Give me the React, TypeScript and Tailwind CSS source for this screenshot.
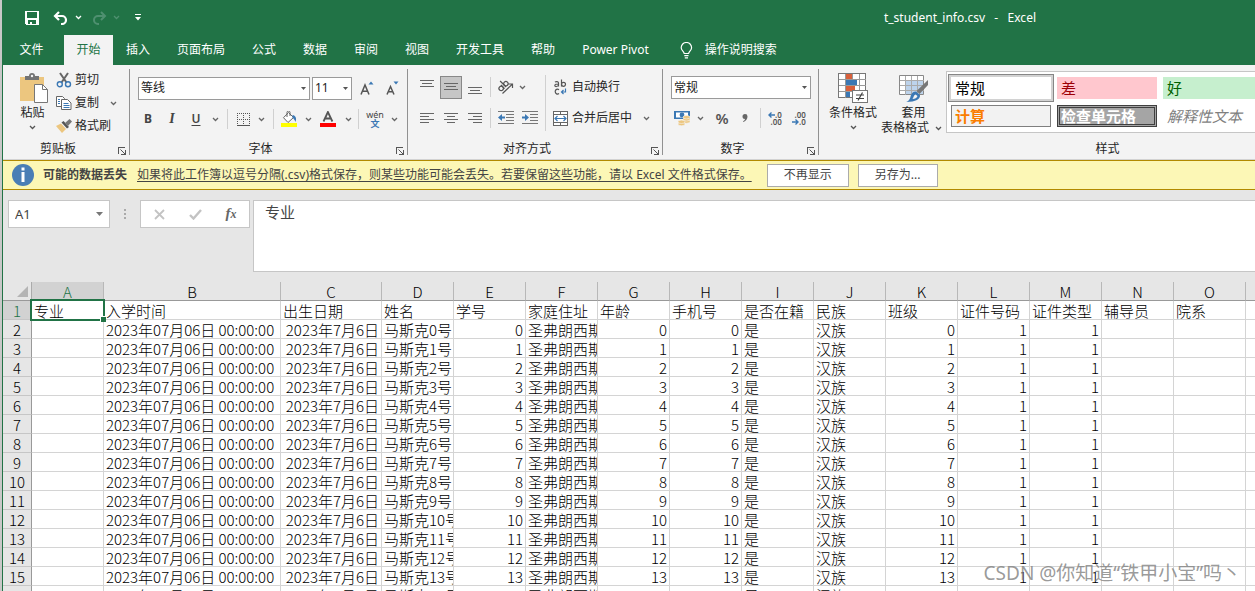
import type { ReactNode } from "react";
import clsx from "clsx";

type Align = "left" | "right";

type Column = {
  id: string;
  title: string;
  width: string;
  align: Align;
  value: (index: number) => string;
};

const COLUMNS: Column[] = [
  { id: "A", title: "专业", width: "w-[72px]", align: "left", value: () => "" },
  { id: "B", title: "入学时间", width: "w-[177px]", align: "left", value: () => "2023年07月06日 00:00:00" },
  { id: "C", title: "出生日期", width: "w-[101px]", align: "right", value: () => "2023年7月6日" },
  { id: "D", title: "姓名", width: "w-[72px]", align: "left", value: (i) => `马斯克${i}号` },
  { id: "E", title: "学号", width: "w-[72px]", align: "right", value: (i) => `${i}` },
  { id: "F", title: "家庭住址", width: "w-[72px]", align: "left", value: () => "圣弗朗西斯科" },
  { id: "G", title: "年龄", width: "w-[72px]", align: "right", value: (i) => `${i}` },
  { id: "H", title: "手机号", width: "w-[72px]", align: "right", value: (i) => `${i}` },
  { id: "I", title: "是否在籍", width: "w-[72px]", align: "left", value: () => "是" },
  { id: "J", title: "民族", width: "w-[72px]", align: "left", value: () => "汉族" },
  { id: "K", title: "班级", width: "w-[72px]", align: "right", value: (i) => `${i}` },
  { id: "L", title: "证件号码", width: "w-[72px]", align: "right", value: () => "1" },
  { id: "M", title: "证件类型", width: "w-[72px]", align: "right", value: () => "1" },
  { id: "N", title: "辅导员", width: "w-[72px]", align: "left", value: () => "" },
  { id: "O", title: "院系", width: "w-[72px]", align: "left", value: () => "" },
  { id: "P", title: "", width: "w-[72px]", align: "left", value: () => "" }
];

const ROWS = Array.from({ length: 15 }, (_, index) => index);

const TABS = ["插入", "页面布局", "公式", "数据", "审阅", "视图", "开发工具", "帮助", "Power Pivot"];

function Chevron({ className }: { className?: string }) {
  return (
    <svg viewBox="0 0 7 5" className={clsx("h-[5px] w-[7px] shrink-0", className)} fill="none" stroke="currentColor" strokeWidth="1.3">
      <path d="M1 1l2.5 2.5L6 1" />
    </svg>
  );
}

function ChevronButton({ label }: { label: string }) {
  return (
    <button type="button" aria-label={label} className="flex h-6 w-3.5 items-center justify-center text-[#666]">
      <Chevron />
    </button>
  );
}

function IconButton({ label, className, children }: { label: string; className?: string; children: ReactNode }) {
  return (
    <button type="button" aria-label={label} className={clsx("flex h-6 items-center justify-center", className ?? "w-6")}>
      {children}
    </button>
  );
}

function Divider({ className }: { className?: string }) {
  return <span className={clsx("w-px shrink-0 bg-[#d0d0d0]", className ?? "h-5")} />;
}

function Combo({ label, options, className }: { label: string; options: string[]; className: string }) {
  return (
    <div className={clsx("relative h-[23px]", className)}>
      <select
        aria-label={label}
        className="h-full w-full appearance-none border border-[#9a9a9a] bg-white pl-0.5 text-xs leading-5 text-[#222]"
      >
        {options.map((option) => (
          <option key={option}>{option}</option>
        ))}
      </select>
      <svg viewBox="0 0 5 3" className="pointer-events-none absolute right-1 top-2.5 h-[3px] w-[5px] fill-[#555]">
        <path d="M0 0h5L2.5 3z" />
      </svg>
    </div>
  );
}

function Group({ title, className, launcher = true, children }: { title: string; className: string; launcher?: boolean; children: ReactNode }) {
  return (
    <section className={clsx("flex shrink-0 flex-col border-r border-[#919191]", className)}>
      <div className="h-[70px]">{children}</div>
      <div className={clsx("relative h-4 text-center leading-5", launcher && "pr-4")}>
        {title}
        {launcher ? (
          <button type="button" aria-label={`${title}设置`} className="absolute right-[3px] top-2">
            <svg viewBox="0 0 8 8" className="h-2 w-2" fill="none" stroke="#555" shapeRendering="crispEdges">
              <path d="M.5 7V.5H7M7.5 3v4.5H3" />
              <path d="M2.5 2.5L7 7" shapeRendering="auto" />
            </svg>
          </button>
        ) : null}
      </div>
    </section>
  );
}

// Each entry is [x1, x2] of one horizontal stroke, three pixels apart.
function Lines({ rows, top = 0 }: { rows: [number, number][]; top?: number }) {
  return (
    <svg viewBox="0 0 14 14" className="h-3.5 w-3.5" stroke="#666" shapeRendering="crispEdges">
      {rows.map(([from, to], index) => (
        <path key={index} d={`M${from} ${top + index * 3 + 0.5}H${to}`} />
      ))}
    </svg>
  );
}

function IndentIcon({ outward }: { outward?: boolean }) {
  return (
    <svg viewBox="0 0 16 14" className="h-3.5 w-4" fill="none">
      <path d="M0 .5H16M8 3.5H16M8 6.5H16M8 9.5H16M0 12.5H16" stroke="#777" shapeRendering="crispEdges" />
      <path d={outward ? "M0 6.5L4 3v2.500h3v2H4V10z" : "M7 6.500L3 3v2.500H0v2h3V10z"} fill="#3b78b4" />
    </svg>
  );
}

function TitleBar() {
  return (
    <header className="flex h-[35px] shrink-0 items-center bg-[#217346] text-white">
      <div className="flex items-center pl-5">
        <IconButton label="保存" className="w-[18px]">
          <svg viewBox="0 0 14 14" className="h-3.5 w-3.5" fill="white" fillRule="evenodd" shapeRendering="crispEdges">
            <path d="M0 0h14v14H1L0 13zM2 1v6h10V1zM3 9v4h2v-2h2v2h4V9z" />
          </svg>
        </IconButton>
        <IconButton label="撤消" className="ml-2.5 w-5">
          <svg viewBox="0 0 16 14" className="h-3.5 w-4" fill="none" stroke="white" strokeWidth="2.2">
            <path d="M2 5h7a4 4 0 010 8H8" />
            <path d="M6 1L2 5l4 4" />
          </svg>
        </IconButton>
        <IconButton label="撤消列表" className="w-3.5">
          <Chevron />
        </IconButton>
        <IconButton label="恢复" className="ml-1 w-5 text-[#4f9070]">
          <svg viewBox="0 0 16 14" className="h-3.5 w-4" fill="none" stroke="currentColor" strokeWidth="2">
            <path d="M14 5H7a4 4 0 000 8h1" />
            <path d="M10 1l4 4-4 4" />
          </svg>
        </IconButton>
        <IconButton label="恢复列表" className="w-3.5 text-[#4f9070]">
          <Chevron />
        </IconButton>
        <IconButton label="自定义快速访问工具栏" className="ml-2 w-3.5">
          <svg viewBox="0 0 6 7" className="h-[7px] w-1.5" fill="white">
            <path d="M0 0h6v1H0zM0 3h6L3 6.5z" />
          </svg>
        </IconButton>
      </div>
      <h1 className="ml-auto whitespace-pre pr-[219px] text-xs">t_student_info.csv   -   Excel</h1>
    </header>
  );
}

function TabBar() {
  return (
    <nav className="flex h-[30px] shrink-0 items-stretch bg-[#217346] text-white">
      <button type="button" className="w-[61px] pr-1">文件</button>
      <button type="button" className="w-[49px] bg-[#f3f3f3] text-[#217346]">开始</button>
      <div className="flex gap-px">
        {TABS.map((tab) => (
          <button key={tab} type="button" className="whitespace-nowrap px-[13px]">
            {tab}
          </button>
        ))}
      </div>
      <button type="button" className="ml-[18px] flex items-center gap-3 whitespace-nowrap">
        <svg viewBox="0 0 13 17" className="h-[17px] w-[13px]" fill="none" stroke="white" strokeWidth="1.2">
          <path d="M4.200 11.500C4 9.500 1.200 8.500 1.200 5.700a5.200 5.200 0 0110.400 0c0 2.800-2.800 3.800-3 5.800z" />
          <path d="M4.300 13.700h4.200M4.800 15.800h3.200" />
        </svg>
        操作说明搜索
      </button>
    </nav>
  );
}

function ClipboardGroup() {
  return (
    <Group title="剪贴板" className="w-[127px]">
      <div className="flex pl-[13px]">
        <button type="button" className="flex h-[68px] w-[33px] flex-col items-center pt-1">
          <svg viewBox="0 0 28 30" className="ml-0.5 h-[30px] w-7 shrink-0">
            <path d="M0 4h24v24H0z" fill="#ecc67f" />
            <path d="M5 7V3h4a3 3 0 016 0h4v4z" fill="#737373" />
            <circle cx="12" cy="3" r="1.2" fill="#f3f3f3" />
            <path d="M14.500 11.500h8l5 5v13h-13z" fill="white" stroke="#777" />
            <path d="M22.500 11.500v5h5" fill="none" stroke="#777" />
          </svg>
          <span className="mt-0.5 whitespace-nowrap leading-4">粘贴</span>
          <Chevron className="mt-1 text-[#555]" />
        </button>
        <div className="ml-[7px] flex flex-col">
          <button type="button" className="flex h-[22px] items-center gap-[3px]">
            <svg viewBox="0 0 16 16" className="h-4 w-4" fill="none">
              <path d="M4 1l6.500 9.500M12 1L5.500 10.500" stroke="#666" strokeWidth="2" />
              <circle cx="3.800" cy="12.300" r="2.500" stroke="#3b78b4" strokeWidth="1.4" />
              <circle cx="12" cy="12.300" r="2.500" stroke="#3b78b4" strokeWidth="1.4" />
            </svg>
            剪切
          </button>
          <div className="flex h-6 items-center">
            <button type="button" className="flex items-center gap-[3px]">
              <svg viewBox="0 0 16 16" className="h-4 w-4" fill="white" stroke="#666">
                <path d="M.5 1.500h6l2 2v8h-8z" />
                <path d="M5.500 4.500h6l3.500 3.500v6.500H5.500z" />
                <path d="M2 4.500h2M2 6.500h2M2 8.500h2M7.500 8.500h5M7.500 10.500h6M7.500 12.500h6" stroke="#3b78b4" />
              </svg>
              复制
            </button>
            <span className="w-[7px]" />
            <ChevronButton label="复制选项" />
          </div>
          <button type="button" className="flex h-[22px] items-center gap-[3px]">
            <svg viewBox="0 0 16 14" className="h-3.5 w-4">
              <path d="M0 7l5-2.500 5 5.500-4 4z" fill="#ecc67f" />
              <path d="M5.500 3.500l2-1.500L13 8l-2 1.500z" fill="#555" />
              <path d="M9 4l4.500-4L16 2.500 12 7z" fill="#777" />
            </svg>
            格式刷
          </button>
        </div>
      </div>
    </Group>
  );
}

function FontGroup() {
  return (
    <Group title="字体" className="w-[278px]">
      <div className="flex items-center gap-0.5 pl-2 pt-[7px]">
        <Combo label="字体" options={["等线", "宋体"]} className="w-[172px]" />
        <Combo label="字号" options={["11", "12", "14"]} className="w-10" />
        <IconButton label="增大字号" className="ml-0.5 w-[22px]">
          <svg viewBox="0 0 14 14" className="h-3.5 w-3.5" fill="none" stroke="#555" strokeWidth="1.5">
            <path d="M1 13.500L5 4l4 9.500M2.500 10.200h5" />
            <path d="M8.500 3.500L11 .5l2.500 3z" fill="#3b78b4" stroke="none" />
          </svg>
        </IconButton>
        <IconButton label="减小字号" className="w-6">
          <svg viewBox="0 0 14 14" className="h-3.5 w-3.5" fill="none" stroke="#555" strokeWidth="1.5">
            <path d="M2 13.500L5.500 5.500 9 13.500M3.300 10.700h4.500" />
            <path d="M8.500 .5h5L11 3.500z" fill="#3b78b4" stroke="none" />
          </svg>
        </IconButton>
      </div>
      <div className="flex items-center pl-1.5 pt-[7px] text-[#444]">
        <IconButton label="加粗">
          <b className="text-xs">B</b>
        </IconButton>
        <IconButton label="倾斜">
          <i className="font-['Liberation_Serif',serif] text-sm font-bold">I</i>
        </IconButton>
        <IconButton label="下划线">
          <u className="text-xs font-semibold underline-offset-2">U</u>
        </IconButton>
        <ChevronButton label="下划线选项" />
        <Divider className="ml-[5px] h-5" />
        <IconButton label="边框" className="ml-1 w-[22px]">
          <svg viewBox="0 0 13 13" className="h-[13px] w-[13px]" stroke="#555" fill="none" shapeRendering="crispEdges">
            <path d="M0 .5H13M0 6.500H13M.5 0V12M6.500 0V12M12.500 0V12" strokeDasharray="1 1" />
            <path d="M0 12.500H13" />
          </svg>
        </IconButton>
        <ChevronButton label="边框选项" />
        <Divider className="ml-[5px] h-5" />
        <IconButton label="填充颜色" className="ml-[3px] w-6">
          <svg viewBox="0 0 16 16" className="h-4 w-4">
            <path d="M7.500 1.500l5 5-5.500 5-4.500-4.800z" fill="white" stroke="#666" />
            <path d="M6 6V1.500a1.500 1.500 0 013 0V5" fill="none" stroke="#666" />
            <path d="M11.500 4c3 .5 4.500 3 3 7-1-2-1.500-3.500-3-4z" fill="#3b78b4" />
            <path d="M0 12h16v4H0z" fill="#ffff00" />
          </svg>
        </IconButton>
        <ChevronButton label="填充颜色选项" />
        <IconButton label="字体颜色" className="w-[26px]">
          <svg viewBox="0 0 16 16" className="h-4 w-4">
            <path d="M3.500 10.500L7.900 1l4.500 9.500M5 7.500h6" fill="none" stroke="#555" strokeWidth="1.8" />
            <path d="M0 12h16v4H0z" fill="#ff0000" />
          </svg>
        </IconButton>
        <ChevronButton label="字体颜色选项" />
        <Divider className="ml-[3px] h-5" />
        <IconButton label="拼音指南" className="ml-1 w-6">
          <span className="flex flex-col items-center">
            <span className="text-[9px] leading-[9px]">wén</span>
            <span className="text-[9px] font-bold leading-[9px] text-[#3b78b4]">文</span>
          </span>
        </IconButton>
        <ChevronButton label="拼音指南选项" />
      </div>
    </Group>
  );
}

function AlignGroup() {
  return (
    <Group title="对齐方式" className="w-[255px]">
      <div className="flex pl-[7px]">
        <div className="pt-1.5">
          <div className="flex items-center">
            <IconButton label="顶端对齐" className="w-6">
              <Lines rows={[[0, 14], [2, 12], [0, 14]]} />
            </IconButton>
            <button type="button" aria-label="垂直居中" aria-pressed="true" className="mx-px flex h-[23px] w-[22px] items-center justify-center border border-[#888] bg-[#c6c6c6]">
              <Lines rows={[[0, 14], [2, 12], [0, 14]]} top={3} />
            </button>
            <IconButton label="底端对齐" className="w-6">
              <Lines rows={[[0, 14], [2, 12], [0, 14]]} top={7} />
            </IconButton>
            <Divider className="ml-[3px] h-5" />
            <IconButton label="方向" className="ml-1 w-5">
              <svg viewBox="0 0 17 17" className="h-[17px] w-[17px]" fill="none" stroke="#555" strokeWidth="1.2">
                <path d="M5.500 14.500L15 5.500M11.500 5H15.500V9" />
                <g transform="rotate(-45 7 8)">
                  <circle cx="4" cy="7" r="2.200" />
                  <path d="M6.300 4.500v5M8.500 1v8.500" />
                  <circle cx="10.700" cy="7" r="2.200" />
                </g>
              </svg>
            </IconButton>
            <ChevronButton label="方向选项" />
          </div>
          <div className="flex items-center pt-[7px]">
            <IconButton label="左对齐">
              <Lines rows={[[0, 14], [0, 9], [0, 14], [0, 9]]} top={2} />
            </IconButton>
            <IconButton label="居中">
              <Lines rows={[[0, 14], [3, 11], [0, 14], [3, 11]]} top={2} />
            </IconButton>
            <IconButton label="右对齐">
              <Lines rows={[[0, 14], [5, 14], [0, 14], [5, 14]]} top={2} />
            </IconButton>
            <Divider className="ml-[3px] h-5" />
            <IconButton label="减少缩进量" className="ml-[3px] w-6">
              <IndentIcon outward />
            </IconButton>
            <IconButton label="增加缩进量">
              <IndentIcon />
            </IconButton>
          </div>
        </div>
        <Divider className="ml-[3px] mt-1.5 h-14" />
        <div className="pl-[7px] pt-1.5">
          <button type="button" className="flex h-6 items-center gap-1">
            <svg viewBox="0 0 15 16" className="h-4 w-[15px]" fill="none" stroke="#555" strokeWidth="1.2">
              <path d="M2 3.200c1-1 3.500-.8 3.500.8v3.500M5.500 5c-2 0-3.700.2-3.700 1.500 0 1.400 2.700 1.400 3.700-.2M8.500.5v7" />
              <circle cx="10.500" cy="5.300" r="2" />
              <path d="M6 10.700c-1.500-1.200-3.800-.4-3.800 1.900s2.300 3 3.800 1.900" />
              <path d="M12.500 9.500v3.500H8.500M10.500 11l-2 2 2 2" stroke="#3b78b4" />
            </svg>
            自动换行
          </button>
          <div className="flex items-center pt-[7px]">
            <button type="button" className="flex h-6 items-center gap-1">
              <svg viewBox="0 0 15 15" className="h-[15px] w-[15px]" fill="none" stroke="#666" shapeRendering="crispEdges">
                <path d="M.5.5h14v14H.5zM.5 3.500h14M.5 11.500h14M7.500.5v3M7.500 11.500v3" fill="white" />
                <path d="M2 7.500h11M4.500 5L2 7.500 4.500 10M10.500 5L13 7.500 10.500 10" stroke="#3b78b4" strokeWidth="1.2" shapeRendering="auto" />
              </svg>
              合并后居中
            </button>
            <span className="w-[7px]" />
            <ChevronButton label="合并选项" />
          </div>
        </div>
      </div>
    </Group>
  );
}

function NumberGroup() {
  return (
    <Group title="数字" className="w-[156px]">
      <div className="pl-2 pt-[7px]">
        <Combo label="数字格式" options={["常规", "数值", "货币"]} className="w-[140px]" />
      </div>
      <div className="flex items-center pl-2 pt-[7px] text-[#555]">
        <IconButton label="会计数字格式" className="w-[22px]">
          <svg viewBox="0 0 17 16" className="h-4 w-[17px]">
            <path d="M0 1h16v8H0z" fill="#3b78b4" />
            <path d="M2 2.500h12v5H2z" fill="white" />
            <circle cx="8" cy="5" r="2.400" fill="#3b78b4" />
            <g fill="#ecc67f" stroke="#f3f3f3" strokeWidth=".6">
              <ellipse cx="12.500" cy="11.500" rx="3.500" ry="1.700" />
              <ellipse cx="12.500" cy="9.300" rx="3.500" ry="1.700" />
              <ellipse cx="12.500" cy="7.200" rx="3.500" ry="1.700" />
              <ellipse cx="7.500" cy="14" rx="3.500" ry="1.700" />
              <ellipse cx="7.500" cy="11.800" rx="3.500" ry="1.700" />
            </g>
          </svg>
        </IconButton>
        <ChevronButton label="会计格式选项" />
        <IconButton label="百分比样式" className="ml-1 w-[22px]">
          <span className="text-[15px] font-semibold">%</span>
        </IconButton>
        <IconButton label="千位分隔样式" className="w-6">
          <svg viewBox="0 0 6 8" className="h-2 w-1.5 fill-[#666]">
            <path d="M3 0a2.500 2.500 0 012.500 2.600C5.500 5 4 7.300 1.500 8L1 7.200C2.300 6.600 3 5.800 3 5A2.500 2.500 0 013 0z" />
          </svg>
        </IconButton>
        <Divider className="ml-[3px] h-5" />
        <IconButton label="增加小数位数" className="ml-0.5 w-6">
          <span className="flex flex-col items-end text-[8px] font-semibold leading-[7px]">
            <span className="flex items-center">
              <svg viewBox="0 0 7 6" className="h-1.5 w-[7px]" fill="none" stroke="#3b78b4" strokeWidth="1.4">
                <path d="M7 3H1M3.500.5L1 3l2.500 2.500" />
              </svg>
              .0
            </span>
            <span>.00</span>
          </span>
        </IconButton>
        <IconButton label="减少小数位数" className="w-6">
          <span className="flex flex-col items-end text-[8px] font-semibold leading-[7px]">
            <span>.00</span>
            <span className="flex items-center">
              <svg viewBox="0 0 7 6" className="h-1.5 w-[7px]" fill="none" stroke="#3b78b4" strokeWidth="1.4">
                <path d="M0 3h6M3.500.5L6 3 3.500 5.500" />
              </svg>
              .0
            </span>
          </span>
        </IconButton>
      </div>
    </Group>
  );
}

function StyleGallery() {
  return (
    <div className="mt-0.5 grid h-[62px] grid-cols-[100px_100px_100px_100px] content-start gap-x-1.5 gap-y-[6px] border border-[#c6c6c6] bg-white px-1 pt-[5px] text-[15px] *:h-[22px] *:text-left">
      <button type="button" className="bg-white px-1 leading-5 text-black outline outline-offset-2 outline-[#868686] ring-2 ring-[#d2d2d2]">
        常规
      </button>
      <button type="button" className="bg-[#ffc7ce] px-1 leading-5 text-[#9c0006]">差</button>
      <button type="button" className="bg-[#c6efce] px-1 leading-5 text-[#006100]">好</button>
      <button type="button" className="bg-[#ffeb9c] px-1 leading-5 text-[#9c5700]">适中</button>
      <button type="button" className="border border-[#7f7f7f] bg-[#f2f2f2] px-[3px] font-bold leading-[18px] text-[#fa7d00]">计算</button>
      <button type="button" className="whitespace-nowrap border-3 border-double border-[#3f3f3f] bg-[#a5a5a5] px-px font-bold leading-4 text-white">
        检查单元格
      </button>
      <button type="button" className="whitespace-nowrap px-1 leading-5 italic text-[#7f7f7f]">解释性文本</button>
      <button type="button" className="whitespace-nowrap px-1 leading-5 text-[#ff0000]">警告文本</button>
    </div>
  );
}

function StylesGroup() {
  return (
    <Group title="样式" className="w-[578px]" launcher={false}>
      <div className="flex">
        <button type="button" className="ml-1.5 flex h-[68px] w-14 shrink-0 flex-col items-center pt-1">
          <svg viewBox="0 0 30 30" className="h-[30px] w-[30px] shrink-0" shapeRendering="crispEdges">
            <path d="M.5.5h27v24H.5z" fill="white" stroke="#777" />
            <path d="M7.500.5v24M14 .5v24M21 .5v24M.5 6.500h27M.5 12.500h27M.5 18.500h27" stroke="#999" fill="none" />
            <path d="M8 1h6v5H8zM8 13h9v5H8z" fill="#d9603b" />
            <path d="M8 7h11v5H8zM8 19h4v5H8z" fill="#3b78b4" />
            <path d="M14.500 17.500h15v12h-15z" fill="white" stroke="#777" />
            <path d="M18 22h8M18 25.500h8M24.500 19.500l-4.500 8" stroke="#444" strokeWidth="1.2" fill="none" shapeRendering="auto" />
          </svg>
          <span className="mt-0.5 whitespace-nowrap leading-4">条件格式</span>
          <Chevron className="mt-1 text-[#555]" />
        </button>
        <button type="button" className="flex h-[68px] w-[65px] shrink-0 flex-col items-center pt-1">
          <svg viewBox="0 0 30 30" className="h-[30px] w-[30px] shrink-0">
            <path d="M.5 2.500h24v19H.5z" fill="white" stroke="#888" />
            <path d="M7 8h17v13H7z" fill="#bdd3eb" />
            <path d="M6.500 2.500v19M12.500 2.500v19M18.500 2.500v19M.5 7.500h24M.5 12.500h24M.5 17.500h24" stroke="#aaa" fill="none" shapeRendering="crispEdges" />
            <path d="M29 7v5l-8.500 9-3-3z" fill="#777" />
            <path d="M17 18.500l4 3.500c.5 4-4 7-14 7 4-1.500 4-4 5-7 .8-2.500 3-3.500 5-3.500z" fill="#3b78b4" />
            <path d="M16.500 21.500c-2 .5-1.500 2.500-3 4.500 2.500 0 4.500-1 5-3z" fill="#f3f3f3" />
          </svg>
          <span className="mt-0.5 leading-4">套用</span>
          <span className="flex items-center gap-1.5 whitespace-nowrap pr-1 leading-[14px]">
            表格格式
            <Chevron className="text-[#555]" />
          </span>
        </button>
        <StyleGallery />
      </div>
    </Group>
  );
}

function MessageBar() {
  return (
    <div className="flex h-[30px] shrink-0 items-center border-y border-[#b28a00] bg-[#fcf7b6] text-[#444]" role="status">
      <svg viewBox="0 0 22 22" className="ml-[9px] h-[22px] w-[22px] shrink-0">
        <circle cx="11" cy="11" r="11" fill="#4a7eb5" />
        <path d="M9.500 3.500h3v3h-3zM9.500 8h3v10h-3z" fill="white" />
      </svg>
      <strong className="ml-[9px] whitespace-nowrap">可能的数据丢失</strong>
      <a href="#" className="ml-2.5 whitespace-nowrap underline underline-offset-2">
        如果将此工作簿以逗号分隔(.csv)格式保存，则某些功能可能会丢失。若要保留这些功能，请以 Excel 文件格式保存。
      </a>
      <button type="button" className="ml-[15px] h-[23px] w-[82px] shrink-0 border border-[#ababab] bg-white">不再显示</button>
      <button type="button" className="ml-[9px] h-[23px] w-20 shrink-0 border border-[#ababab] bg-white">另存为...</button>
    </div>
  );
}

function FormulaBar() {
  return (
    <div className="flex shrink-0 items-start pb-2.5 pl-[5px] pt-2.5 text-[#444]">
      <div className="relative h-7 w-[102px] shrink-0">
        <input
          aria-label="名称框"
          defaultValue="A1"
          className="h-full w-full border border-[#c6c6c6] bg-white pl-1.5 text-[13px]"
        />
        <svg viewBox="0 0 7 4" className="pointer-events-none absolute right-[7px] top-3 h-1 w-[7px] fill-[#777]">
          <path d="M0 0h7L3.500 4z" />
        </svg>
      </div>
      <svg viewBox="0 0 2 10" className="ml-3.5 mt-[9px] h-2.5 w-0.5 fill-[#aaa]">
        <path d="M0 0h2v2H0zM0 4h2v2H0zM0 8h2v2H0z" />
      </svg>
      <div className="ml-3.5 flex h-7 w-[110px] shrink-0 items-center border border-[#c6c6c6] bg-white">
        <button type="button" aria-label="取消" className="flex h-full w-9 items-center justify-center">
          <svg viewBox="0 0 11 11" className="h-[11px] w-[11px]" stroke="#c3c3c3" strokeWidth="1.8">
            <path d="M1 1l9 9M10 1L1 10" />
          </svg>
        </button>
        <button type="button" aria-label="输入" className="flex h-full w-9 items-center justify-center">
          <svg viewBox="0 0 13 11" className="h-[11px] w-[13px]" stroke="#c3c3c3" strokeWidth="2.4" fill="none">
            <path d="M1 6l3.500 3.500L12 1" />
          </svg>
        </button>
        <button type="button" aria-label="插入函数" className="h-full w-9 font-['Liberation_Serif',serif] text-[15px] font-bold italic text-[#666]">
          f<span className="text-xs">x</span>
        </button>
      </div>
      <textarea
        aria-label="编辑栏"
        defaultValue="专业"
        className="ml-[3px] h-[72px] min-w-0 flex-1 resize-none border border-r-0 border-[#c6c6c6] bg-white pl-[11px] pt-px text-[15px] leading-5"
      />
    </div>
  );
}

function Sheet() {
  return (
    <div className="min-h-0 flex-1 overflow-hidden">
      <table className="w-[1287px] table-fixed border-separate border-spacing-0 bg-white font-['Noto_Sans_CJK_SC',sans-serif] text-[15px] font-light leading-4 text-black">
        <thead>
          <tr className="h-[19px] bg-[#e6e6e6]">
            <th className="w-[29px] border-b border-r border-b-[#999] border-r-[#ababab] p-0">
              <svg viewBox="0 0 11 11" className="ml-auto mr-[3px] h-[11px] w-[11px] fill-[#b4b4b4]">
                <path d="M11 0v11H0z" />
              </svg>
            </th>
            {COLUMNS.map((column) => (
              <th
                key={column.id}
                scope="col"
                className={clsx(
                  "h-[19px] border-b border-r border-b-[#999] border-r-[#b8b8b8] p-0 align-bottom font-light",
                  column.width,
                  column.id === "A" && "bg-[#d2d2d2] text-[#217346]"
                )}
              >
                {column.id}
              </th>
            ))}
          </tr>
        </thead>
        <tbody>
          <tr className="h-[19px]">
            <th scope="row" className="h-[19px] border-b border-r border-b-[#c6c6c6] border-r-[#999] bg-[#d2d2d2] p-0 align-bottom font-light text-[#217346]">
              1
            </th>
            {COLUMNS.map((column) => (
              <td key={column.id} className="relative h-[19px] whitespace-nowrap border-b border-r border-[#d4d4d4] p-0 pl-0.5 align-bottom">
                {column.title}
                {column.id === "A" ? (
                  <div className="pointer-events-none absolute -bottom-0.5 -left-0.5 -right-0.5 -top-0.5 z-10 border-2 border-[#217346]">
                    <span className="absolute -bottom-[3px] -right-[3px] h-1.5 w-1.5 border-l border-t border-white bg-[#217346]" />
                  </div>
                ) : null}
              </td>
            ))}
          </tr>
          {ROWS.map((index) => (
            <tr key={index} className="h-[19px]">
              <th scope="row" className="h-[19px] border-b border-r border-b-[#c6c6c6] border-r-[#999] bg-[#e6e6e6] p-0 align-bottom font-light">
                {index + 2}
              </th>
              {COLUMNS.map((column) => (
                <td
                  key={column.id}
                  className={clsx(
                    "h-[19px] overflow-hidden whitespace-nowrap border-b border-r border-[#d4d4d4] p-0 align-bottom",
                    column.align === "right" ? "pr-0.5 text-right" : "pl-0.5"
                  )}
                >
                  {column.value(index)}
                </td>
              ))}
            </tr>
          ))}
        </tbody>
      </table>
    </div>
  );
}

export default function App() {
  return (
    <div className="flex h-screen overflow-hidden bg-[#c8c8c8] pl-0.5 font-['Noto_Sans','Noto_Sans_CJK_SC',sans-serif] text-xs">
      <div className="flex min-w-0 flex-1 flex-col overflow-hidden border-l border-[#217346] bg-[#e6e6e6]">
        <TitleBar />
        <TabBar />
        <div className="flex h-[95px] shrink-0 overflow-hidden border-b border-[#d2d2d2] bg-[#f3f3f3] pb-1 pt-1 text-[#262626]">
          <ClipboardGroup />
          <FontGroup />
          <AlignGroup />
          <NumberGroup />
          <StylesGroup />
        </div>
        <MessageBar />
        <FormulaBar />
        <Sheet />
      </div>
      <p className="pointer-events-none absolute bottom-1.5 right-3.5 whitespace-nowrap text-[19px] leading-6 text-[#808080]/80">
        CSDN @你知道“铁甲小宝”吗丶
      </p>
    </div>
  );
}
